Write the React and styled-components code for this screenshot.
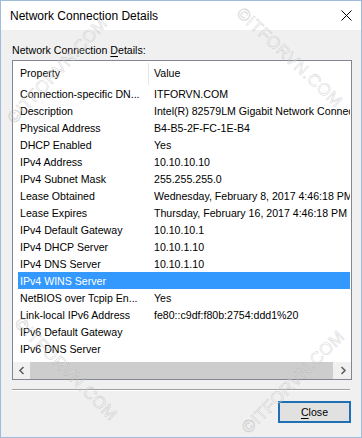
import React from "react";
import styled, { createGlobalStyle } from "styled-components";

const Global = createGlobalStyle`
  html, body { margin: 0; padding: 0; background: #f0f0f0; }
  body { width: 362px; height: 438px; overflow: hidden; }
  * { box-sizing: border-box; }
`;

const FONT = `"Segoe UI", "Liberation Sans", Arial, sans-serif`;

const Window = styled.div`
  position: relative;
  width: 362px;
  height: 438px;
  border: 1px solid #9fbcdc;
  background: #f0f0f0;
  display: flex;
  flex-direction: column;
  font-family: ${FONT};
  color: #000;
  overflow: hidden;
`;

const TitleBar = styled.div`
  height: 29px;
  flex: none;
  background: #ffffff;
  display: flex;
  align-items: center;
  justify-content: space-between;
  padding: 0 9px 0 9px;
`;

const Title = styled.span`
  font-size: 12px;
  letter-spacing: 0;
`;

const CloseGlyph = styled.svg`
  width: 11px;
  height: 11px;
  display: block;
`;

const Body = styled.div`
  flex: 1;
  display: flex;
  flex-direction: column;
  padding: 13px 9px 0 11px;
`;

const Label = styled.div`
  font-size: 10.6px;
  line-height: 14px;
  height: 14px;
  margin-bottom: 3px;
`;

const Key = styled.span`
  text-decoration: underline;
  text-underline-offset: 2px;
`;

const ListBox = styled.div`
  height: 320px;
  border: 1px solid #828790;
  background: #ffffff;
  display: flex;
  flex-direction: column;
  font-size: 10.6px;
  overflow: hidden;
`;

const Header = styled.div`
  height: 24px;
  flex: none;
  display: grid;
  grid-template-columns: 135px 1px 1fr;
  align-items: center;
`;

const HeaderCell = styled.div`
  padding-left: ${(p) => p.$pad}px;
  white-space: nowrap;
`;

const HeaderDivider = styled.div`
  align-self: stretch;
  margin-top: 2px;
  background: #e5e5e5;
`;

const Rows = styled.div`
  flex: 1;
  display: flex;
  flex-direction: column;
`;

const Row = styled.div`
  height: 17px;
  margin: 0 1px 0 5px;
  display: grid;
  grid-template-columns: 136px 1fr;
  align-items: center;
  white-space: nowrap;
  overflow: hidden;
  background: ${(p) => (p.$selected ? "#3399ff" : "transparent")};
  color: ${(p) => (p.$selected ? "#ffffff" : "#000000")};
`;

const Cell = styled.span`
  padding-left: ${(p) => p.$pad}px;
  overflow: hidden;
`;

const Scrollbar = styled.div`
  height: 17px;
  flex: none;
  display: flex;
  background: #f0f0f0;
`;

const ArrowButton = styled.div`
  width: 17px;
  flex: none;
  display: flex;
  align-items: center;
  justify-content: center;
`;

const Thumb = styled.div`
  flex: 1;
  margin: 0 1px 0 0;
  background: #cdcdcd;
`;

const Separator = styled.div`
  margin: 9px 2px 0 0;
  height: 2px;
  border-top: 1px solid #a0a0a0;
  border-bottom: 1px solid #ffffff;
`;

const Footer = styled.div`
  display: flex;
  justify-content: flex-end;
  padding: 10px 1px 0 0;
`;

const Button = styled.button`
  width: 73px;
  height: 22px;
  border: 2px solid #1f6fb2;
  background: #e1e1e1;
  font-family: ${FONT};
  font-size: 10.6px;
  color: #000;
  padding: 0;
  display: flex;
  align-items: center;
  justify-content: center;
`;

const Watermark = styled.span`
  position: absolute;
  left: ${(p) => p.$x}px;
  top: ${(p) => p.$y}px;
  transform-origin: 0 50%;
  transform: rotate(${(p) => p.$angle}deg);
  font-family: "Liberation Sans", Arial, sans-serif;
  font-size: 17px;
  letter-spacing: 0.5px;
  white-space: nowrap;
  color: rgba(255, 255, 255, 0.35);
  -webkit-text-stroke: 0.6px rgba(110, 110, 110, 0.28);
  pointer-events: none;
`;

const Chevron = ({ dir }) => (
  <svg width="8" height="9" viewBox="0 0 8 9">
    <polyline
      points={dir === "left" ? "5.5,1 2,4.5 5.5,8" : "2.5,1 6,4.5 2.5,8"}
      fill="none"
      stroke="#606060"
      strokeWidth="1.6"
    />
  </svg>
);

const rows = [
  ["Connection-specific DN...", "ITFORVN.COM"],
  ["Description", "Intel(R) 82579LM Gigabit Network Connection"],
  ["Physical Address", "B4-B5-2F-FC-1E-B4"],
  ["DHCP Enabled", "Yes"],
  ["IPv4 Address", "10.10.10.10"],
  ["IPv4 Subnet Mask", "255.255.255.0"],
  ["Lease Obtained", "Wednesday, February 8, 2017 4:46:18 PM"],
  ["Lease Expires", "Thursday, February 16, 2017 4:46:18 PM"],
  ["IPv4 Default Gateway", "10.10.10.1"],
  ["IPv4 DHCP Server", "10.10.1.10"],
  ["IPv4 DNS Server", "10.10.1.10"],
  ["IPv4 WINS Server", ""],
  ["NetBIOS over Tcpip En...", "Yes"],
  ["Link-local IPv6 Address", "fe80::c9df:f80b:2754:ddd1%20"],
  ["IPv6 Default Gateway", ""],
  ["IPv6 DNS Server", ""],
];

export default function App() {
  return (
    <>
      <Global />
      <Window>
        <TitleBar>
          <Title>Network Connection Details</Title>
          <CloseGlyph viewBox="0 0 11 11">
            <path d="M0.5 0.5 L10.5 10.5 M10.5 0.5 L0.5 10.5" stroke="#000" strokeWidth="1" />
          </CloseGlyph>
        </TitleBar>
        <Body>
          <Label>
            Network Connection <Key>D</Key>etails:
          </Label>
          <ListBox>
            <Header>
              <HeaderCell $pad={7}>Property</HeaderCell>
              <HeaderDivider />
              <HeaderCell $pad={5}>Value</HeaderCell>
            </Header>
            <Rows>
              {rows.map(([k, v], i) => (
                <Row key={k} $selected={i === 11}>
                  <Cell $pad={2}>{k}</Cell>
                  <Cell $pad={0}>{v}</Cell>
                </Row>
              ))}
            </Rows>
            <Scrollbar>
              <ArrowButton>
                <Chevron dir="left" />
              </ArrowButton>
              <Thumb />
              <ArrowButton>
                <Chevron dir="right" />
              </ArrowButton>
            </Scrollbar>
          </ListBox>
          <Separator />
          <Footer>
            <Button>
              <span>
                <Key>C</Key>lose
              </span>
            </Button>
          </Footer>
        </Body>
        <Watermark $x={10} $y={110} $angle={-47}>©ITFORVN.COM</Watermark>
        <Watermark $x={238} $y={0} $angle={43}>©ITFORVN.COM</Watermark>
        <Watermark $x={16} $y={310} $angle={45}>©ITFORVN.COM</Watermark>
        <Watermark $x={244} $y={420} $angle={-45}>©ITFORVN.COM</Watermark>
      </Window>
    </>
  );
}
